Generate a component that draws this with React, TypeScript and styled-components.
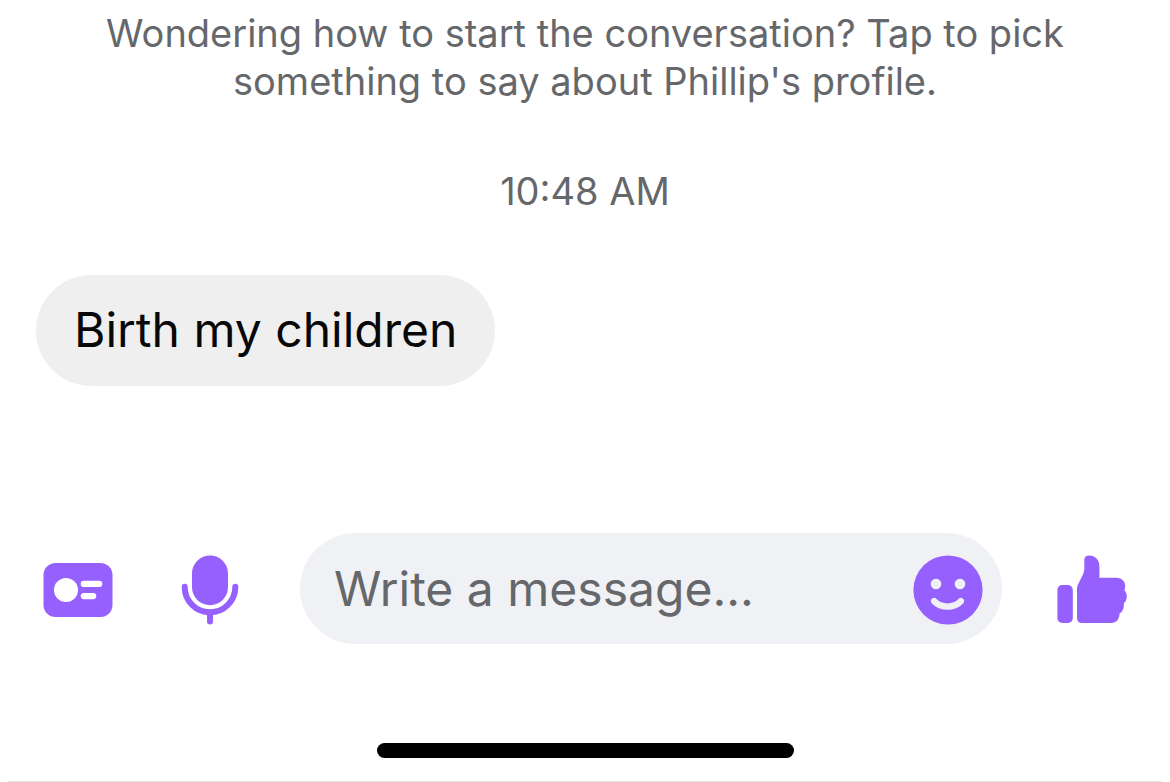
import React from "react";
import styled, { createGlobalStyle } from "styled-components";

const GlobalStyle = createGlobalStyle`
  *, *::before, *::after { box-sizing: border-box; }
  body {
    margin: 0;
    background: #ffffff;
    font-family: Inter, "Liberation Sans", sans-serif;
  }
`;

const Screen = styled.div`
  min-height: 100vh;
  display: flex;
  flex-direction: column;
  padding: 9px 8px 0;
`;

const Thread = styled.main`
  flex: 1;
  display: flex;
  flex-direction: column;
  gap: 60px;
  padding: 0 28px;
`;

const Prompt = styled.button`
  align-self: center;
  max-width: 1000px;
  margin: 0;
  padding: 0;
  border: 0;
  background: none;
  color: #65676b;
  font-family: inherit;
  font-size: 38px;
  line-height: 48px;
  text-align: center;
  cursor: pointer;
`;

const Timestamp = styled.time`
  padding-top: 2px;
  color: #65676b;
  font-size: 38px;
  line-height: 48px;
  text-align: center;
`;

const Bubble = styled.p`
  align-self: flex-start;
  margin: 0;
  padding: 25px 38px 26px;
  border-radius: 56px;
  background: #efefef;
  color: #080809;
  font-size: 48px;
  line-height: 60px;
`;

const Composer = styled.form`
  display: flex;
  align-items: center;
  gap: 55px;
  padding: 0 35px;
`;

const Tools = styled.div`
  display: flex;
  gap: 62px;
`;

const IconButton = styled.button`
  flex: none;
  display: block;
  width: 70px;
  height: 70px;
  margin: 3px 0 0;
  padding: 0;
  border: 0;
  background: none;
  color: #9660ff;
  cursor: pointer;

  svg {
    display: block;
    width: 100%;
    height: 100%;
  }
`;

const Field = styled.div`
  flex: 1;
  min-width: 0;
  display: flex;
  align-items: center;
  height: 111px;
  padding: 0 19px 0 34px;
  border-radius: 56px;
  background: #f0f1f5;
`;

const MessageInput = styled.input`
  flex: 1;
  min-width: 0;
  height: 60px;
  padding: 0;
  border: 0;
  outline: 0;
  background: none;
  color: #080809;
  font-family: inherit;
  font-size: 48px;

  &::placeholder {
    color: #65676b;
    opacity: 1;
  }
`;

const Footer = styled.footer`
  display: flex;
  justify-content: center;
  margin-top: 99px;
  padding-bottom: 23px;
  border-bottom: 1px solid #e4e4e4;
`;

const HomeIndicator = styled.div`
  width: 417px;
  height: 15px;
  border-radius: 8px;
  background: #000000;
`;

const CardIcon = () => (
  <svg viewBox="0 0 70 70" aria-hidden="true">
    <rect x="0.5" y="8" width="69" height="54" rx="12" fill="currentColor" />
    <circle cx="23" cy="35" r="12" fill="#fff" />
    <rect x="37.7" y="25.8" width="21.6" height="6.2" rx="3.1" fill="#fff" />
    <rect x="37.7" y="38" width="15.6" height="6.2" rx="3.1" fill="#fff" />
  </svg>
);

const MicIcon = () => (
  <svg viewBox="0 0 70 70" aria-hidden="true">
    <rect x="17" y="0.4" width="36" height="49.8" rx="18" fill="currentColor" />
    <path
      d="M9.7 31.8v.2a25.3 25.3 0 0 0 50.6 0v-.2M35 58v8.6"
      fill="none"
      stroke="currentColor"
      strokeWidth="6"
      strokeLinecap="round"
    />
  </svg>
);

const SmileIcon = () => (
  <svg viewBox="0 0 70 70" aria-hidden="true">
    <circle cx="35" cy="35" r="34.6" fill="currentColor" />
    <circle cx="23" cy="29" r="5.3" fill="#f0f1f5" />
    <circle cx="47" cy="29" r="5.3" fill="#f0f1f5" />
    <path
      d="M21.2 46.2C28 53.4 41 53.4 47.8 46.2"
      fill="none"
      stroke="#f0f1f5"
      strokeWidth="6.4"
      strokeLinecap="round"
    />
  </svg>
);

const ThumbIcon = () => (
  <svg viewBox="0 0 70 70" aria-hidden="true">
    <rect x="0.4" y="30" width="15.4" height="38" rx="4.8" fill="currentColor" />
    <path
      d="M20 35C20 31.5 20.4 30.6 21.6 28.2L25 21.5C26.8 18 27.3 16 27.3 12.5V4.8C27.3 1.8 29.3 0.4 32.3 0.4C38 0.4 42.4 5 42.4 10.9V22.8H59.5C64.8 22.8 68.2 26.4 68.2 31C68.2 32.6 68 34 67.4 35.2C69 36.8 69.8 38.8 69.8 41.2C69.8 44.2 68.8 46.6 66.8 48.2C67.2 52.6 66 56.4 62.6 58.6C62.2 64.4 59.4 68 54.2 68H25C21.8 68 20 66.2 20 63Z"
      fill="currentColor"
    />
  </svg>
);

export default function App() {
  return (
    <>
      <GlobalStyle />
      <Screen>
        <Thread>
          <Prompt type="button">
            Wondering how to start the conversation? Tap to pick something to
            say about Phillip's profile.
          </Prompt>
          <Timestamp dateTime="10:48">10:48 AM</Timestamp>
          <Bubble>Birth my children</Bubble>
        </Thread>
        <Composer onSubmit={(event: React.FormEvent) => event.preventDefault()}>
          <Tools>
            <IconButton type="button" aria-label="Share profile card">
              <CardIcon />
            </IconButton>
            <IconButton type="button" aria-label="Record voice message">
              <MicIcon />
            </IconButton>
          </Tools>
          <Field>
            <MessageInput
              type="text"
              aria-label="Message"
              placeholder="Write a message..."
            />
            <IconButton type="button" aria-label="Choose an emoji">
              <SmileIcon />
            </IconButton>
          </Field>
          <IconButton type="button" aria-label="Send a like">
            <ThumbIcon />
          </IconButton>
        </Composer>
        <Footer>
          <HomeIndicator />
        </Footer>
      </Screen>
    </>
  );
}
